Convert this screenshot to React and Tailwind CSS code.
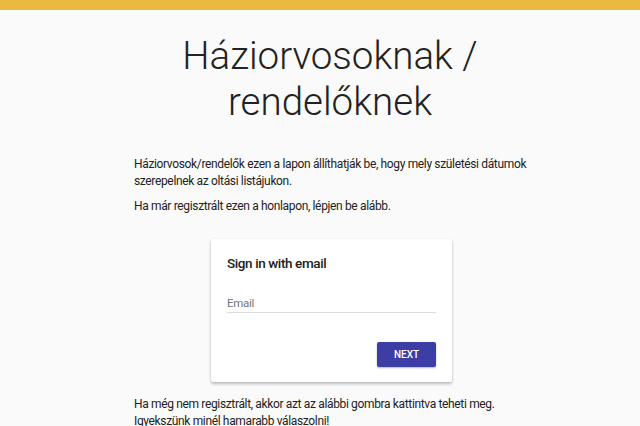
export default function App() {
  return (
    <div className="min-h-[426px] bg-[#fafafa] font-['Roboto',sans-serif] text-[#212121]">
      <div className="h-[10px] bg-[#ebb840]" />
      <h1 className="mt-[23px] pl-[20px] text-center text-[38.5px] font-light leading-[46px] text-[#222]">
        Háziorvosoknak /<br />
        rendelőknek
      </h1>
      <div className="ml-[134px] w-[400px] pt-[31px] text-[12px] leading-[17px] tracking-[-0.35px] text-[#222]">
        <p>
          Háziorvosok/rendelők ezen a lapon állíthatják be, hogy mely születési dátumok
          szerepelnek az oltási listájukon.
        </p>
        <p className="mt-[8px]">Ha már regisztrált ezen a honlapon, lépjen be alább.</p>
      </div>
      <div className="ml-[211px] pt-[24px]">
        <div className="w-[241px] h-[143px] bg-white rounded-[2px] shadow-[0_2px_3px_rgba(0,0,0,0.25),0_0_2px_rgba(0,0,0,0.08)] px-4 pt-[14px]">
          <div className="text-[13.5px] leading-[20px] font-medium tracking-[-0.4px] text-[#212121]">
            Sign in with email
          </div>
          <div className="mt-[22px] border-b border-[#dcdcdc] pb-[1px] text-[11.5px] leading-[16px] tracking-[-0.3px] text-[#757575]">
            Email
          </div>
          <div className="mt-[29px] flex justify-end">
            <button className="h-[25px] w-[59px] rounded-[2px] bg-[#3c3ea6] text-[10px] font-medium text-white shadow-[0_1px_2px_rgba(0,0,0,0.3)]">
              NEXT
            </button>
          </div>
        </div>
      </div>
      <div className="ml-[134px] w-[400px] pt-[14px] text-[12px] leading-[17px] tracking-[-0.35px] text-[#222]">
        <p>
          Ha még nem regisztrált, akkor azt az alábbi gombra kattintva teheti meg.
          Igyekszünk minél hamarabb válaszolni!
        </p>
      </div>
    </div>
  );
}
